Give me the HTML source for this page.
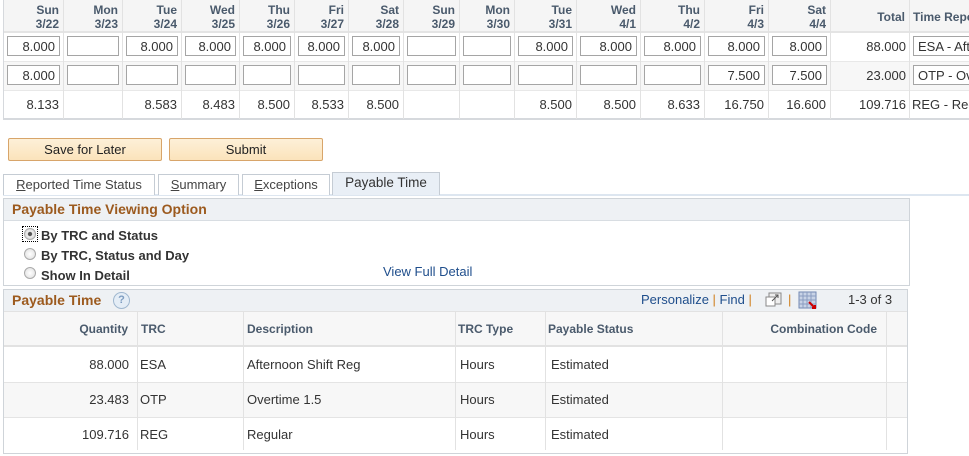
<!DOCTYPE html>
<html><head><meta charset="utf-8"><style>
*{box-sizing:border-box}
body{margin:0;width:969px;height:456px;background:#fff;font-family:"Liberation Sans",Arial,sans-serif;position:relative;overflow:hidden;color:#333}
.a{position:absolute}
.h{font-weight:bold;font-size:12px;color:#4a5a6c;text-align:right;line-height:14px}
.c{font-size:13px;text-align:right}
.inp{position:absolute;border:1px solid #a5a5a5;background:#fff;height:20px;font-size:13px;text-align:right;padding:2px 4px 0 0;color:#333;line-height:16px}
.vl{position:absolute;width:1px;background:#e2e2e2}
.btn{position:absolute;top:138px;height:23px;border:1px solid #d8a56a;border-radius:2px;background:linear-gradient(#fdf0d8,#fbe3bb);font-size:13px;text-align:center;line-height:21px;color:#222}
.tab{position:absolute;top:174px;height:21px;border:1px solid #c5ccd4;border-bottom:none;background:#fff;font-size:13px;color:#444;text-align:center;line-height:19px}
.title{color:#9c5a1e;font-weight:bold;font-size:14px}
.radio{position:absolute;width:12px;height:12px;border-radius:50%;border:1px solid #aaa;background:radial-gradient(#fff,#ddd)}
.rl{position:absolute;font-size:13px;font-weight:bold;color:#333}
.th{position:absolute;top:322px;font-size:12px;font-weight:bold;color:#4a5a6c}
.td{position:absolute;font-size:13px;color:#333}
</style></head><body>
<div class="a" style="left:3px;top:0;width:966px;height:32px;background:#f5f5f5"></div>
<div class="a" style="left:3px;top:61px;width:966px;height:29px;background:#f7f7f7"></div>
<div class="a" style="left:3px;top:31px;width:966px;height:2px;background:#e4e4e4"></div>
<div class="a" style="left:3px;top:61px;width:966px;height:1px;background:#e8e8e8"></div>
<div class="a" style="left:3px;top:90px;width:966px;height:1px;background:#e8e8e8"></div>
<div class="a" style="left:3px;top:118px;width:966px;height:2px;background:#d6d9dd"></div>
<div class="a" style="left:3px;top:0;width:1px;height:120px;background:#d6d9dd"></div>
<div id="cols"></div>
<script>
var e=[3,63,122,181,239,294,348,403,459,514,576,640,704,768,830,909,969];
var d=[["Sun","3/22"],["Mon","3/23"],["Tue","3/24"],["Wed","3/25"],["Thu","3/26"],["Fri","3/27"],["Sat","3/28"],["Sun","3/29"],["Mon","3/30"],["Tue","3/31"],["Wed","4/1"],["Thu","4/2"],["Fri","4/3"],["Sat","4/4"]];
var r1=["8.000","","8.000","8.000","8.000","8.000","8.000","","","8.000","8.000","8.000","8.000","8.000"];
var r2=["8.000","","","","","","","","","","","","7.500","7.500"];
var r3=["8.133","","8.583","8.483","8.500","8.533","8.500","","","8.500","8.500","8.633","16.750","16.600"];
var h="";
for(var i=0;i<14;i++){var L=e[i],R=e[i+1],W=R-L;
h+='<div class="a h" style="left:'+L+'px;top:3px;width:'+(W-4)+'px">'+d[i][0]+'<br>'+d[i][1]+'</div>';
h+='<div class="inp" style="left:'+(L+4)+'px;top:36px;width:'+(W-7)+'px">'+r1[i]+'</div>';
h+='<div class="inp" style="left:'+(L+4)+'px;top:65px;width:'+(W-7)+'px">'+r2[i]+'</div>';
h+='<div class="a c" style="left:'+L+'px;top:97px;width:'+(W-4)+'px">'+r3[i]+'</div>';}
for(var i=1;i<16;i++)h+='<div class="vl" style="left:'+e[i]+'px;top:0;height:119px"></div>';
h+='<div class="a h" style="left:830px;top:10px;width:75px">Total</div>';
h+='<div class="a h" style="left:913px;top:10px;width:80px;text-align:left;white-space:nowrap">Time Reporting</div>';
h+='<div class="a c" style="left:830px;top:39px;width:76px">88.000</div>';
h+='<div class="a c" style="left:830px;top:68px;width:76px">23.000</div>';
h+='<div class="a c" style="left:830px;top:97px;width:76px">109.716</div>';
h+='<div class="inp" style="left:913px;top:36px;width:80px;text-align:left;padding-left:4px;white-space:nowrap">ESA - Afternoon</div>';
h+='<div class="inp" style="left:913px;top:65px;width:80px;text-align:left;padding-left:4px;white-space:nowrap">OTP - Overtime</div>';
h+='<div class="a c" style="left:912px;top:97px;text-align:left;white-space:nowrap">REG - Regular</div>';
document.getElementById("cols").innerHTML=h;
</script>
<div class="btn" style="left:8px;width:154px">Save for Later</div>
<div class="btn" style="left:169px;width:154px">Submit</div>
<div class="a" style="left:3px;top:194px;width:966px;height:2px;background:#dde6f0"></div>
<div class="tab" style="left:3px;width:152px"><u>R</u>eported Time Status</div>
<div class="tab" style="left:158px;width:81px"><u>S</u>ummary</div>
<div class="tab" style="left:242px;width:88px"><u>E</u>xceptions</div>
<div class="tab" style="left:332px;width:108px;background:#e9eff6;color:#333;top:172px;height:23px;font-size:13.5px">Payable Time</div>
<div class="a" style="left:3px;top:198px;width:907px;height:88px;border:1px solid #cfd4d9"></div>
<div class="a" style="left:4px;top:199px;width:905px;height:22px;background:#eef1f4;border-bottom:1px solid #d8dde2"></div>
<div class="a title" style="left:12px;top:201px">Payable Time Viewing Option</div>
<div class="a" style="left:22px;top:226px;width:16px;height:16px;border:1px dotted #000"></div>
<div class="radio" style="left:24px;top:228px;background:radial-gradient(#555 25%,#eee 35%,#ccc)"></div>
<div class="radio" style="left:24px;top:248px"></div>
<div class="radio" style="left:24px;top:267px"></div>
<div class="rl" style="left:41px;top:228px">By TRC and Status</div>
<div class="rl" style="left:41px;top:248px">By TRC, Status and Day</div>
<div class="rl" style="left:41px;top:268px">Show In Detail</div>
<div class="a" style="left:383px;top:264px;font-size:13px;color:#1f4e8c">View Full Detail</div>
<div class="a" style="left:3px;top:289px;width:905px;height:165px;border:1px solid #cfd4d9"></div>
<div class="a" style="left:4px;top:290px;width:903px;height:21px;background:#eef1f4"></div>
<div class="a title" style="left:12px;top:292px">Payable Time</div>
<div class="a" style="left:113px;top:292px;width:17px;height:17px;border-radius:50%;border:1px solid #9fb7cf;background:#e4edf6;color:#7d9cc0;font-size:11px;font-weight:bold;text-align:center;line-height:15px">?</div>
<div class="a" style="left:641px;top:292px;font-size:13px;color:#1f4e8c">Personalize <span style="color:#d0801f">|</span> Find <span style="color:#d0801f">|</span></div>
<svg class="a" style="left:765px;top:292px" width="18" height="16"><rect x="4" y="1" width="12" height="11" fill="#eee" stroke="#888"/><rect x="1" y="5" width="9" height="9" fill="#fff" stroke="#888"/><path d="M7 9l6-6M10 3h3v3" stroke="#555" fill="none"/></svg>
<div class="a" style="left:788px;top:292px;color:#d0801f;font-size:13px">|</div>
<svg class="a" style="left:798px;top:291px" width="19" height="18"><rect x="1" y="1" width="17" height="16" fill="#c8d3e6" stroke="#7389b3"/><path d="M1 5h17M1 9h17M1 13h17M5 1v16M9 1v16M13 1v16" stroke="#8a9cc0"/><path d="M11 11l6 6M14 17h3v-3" stroke="#c00" stroke-width="2"/></svg>
<div class="a" style="left:848px;top:292px;font-size:13px;color:#333">1-3 of 3</div>
<div class="a" style="left:4px;top:311px;width:903px;height:36px;background:#f7f7f7;border-top:1px solid #e2e2e2;border-bottom:2px solid #e2e2e2"></div>
<div class="a" style="left:4px;top:382px;width:903px;height:35px;background:#f7f7f7"></div>
<div class="a" style="left:4px;top:382px;width:903px;height:1px;background:#e4e4e4"></div>
<div class="a" style="left:4px;top:417px;width:903px;height:1px;background:#e4e4e4"></div>
<div class="vl" style="left:137px;top:311px;height:139px"></div>
<div class="vl" style="left:243px;top:311px;height:139px"></div>
<div class="vl" style="left:455px;top:311px;height:139px"></div>
<div class="vl" style="left:545px;top:311px;height:139px"></div>
<div class="vl" style="left:722px;top:311px;height:139px"></div>
<div class="vl" style="left:886px;top:311px;height:139px"></div>
<div class="th" style="left:4px;width:124px;text-align:right">Quantity</div>
<div class="th" style="left:141px">TRC</div>
<div class="th" style="left:247px">Description</div>
<div class="th" style="left:458px">TRC Type</div>
<div class="th" style="left:548px">Payable Status</div>
<div class="th" style="left:722px;width:155px;text-align:right">Combination Code</div>
<div class="td" style="left:4px;top:357px;width:164px;text-align:right;width:164px"></div>
<div class="td" style="left:4px;top:357px;width:164px"></div>
<div class="td" style="left:4px;top:357px;width:164px"></div>
<div class="td" style="left:4px;top:357px;width:165px"></div>
<div class="td" style="left:4px;top:357px;width:164px"></div>
<div class="td" style="left:4px;top:357px;width:163px"></div>
<div class="td" style="left:4px;top:357px;width:164px;text-align:right"></div>
<div class="td" style="left:4px;top:357px;width:164px"></div>
<div class="td" style="left:4px;top:357px;width:164px"></div>
<div class="td" style="left:4px;top:357px;width:125px;text-align:right">88.000</div>
<div class="td" style="left:4px;top:392px;width:125px;text-align:right">23.483</div>
<div class="td" style="left:4px;top:427px;width:125px;text-align:right">109.716</div>
<div class="td" style="left:140px;top:357px">ESA</div>
<div class="td" style="left:140px;top:392px">OTP</div>
<div class="td" style="left:140px;top:427px">REG</div>
<div class="td" style="left:247px;top:357px">Afternoon Shift Reg</div>
<div class="td" style="left:247px;top:392px">Overtime 1.5</div>
<div class="td" style="left:247px;top:427px">Regular</div>
<div class="td" style="left:460px;top:357px">Hours</div>
<div class="td" style="left:460px;top:392px">Hours</div>
<div class="td" style="left:460px;top:427px">Hours</div>
<div class="td" style="left:551px;top:357px">Estimated</div>
<div class="td" style="left:551px;top:392px">Estimated</div>
<div class="td" style="left:551px;top:427px">Estimated</div>
</body></html>
